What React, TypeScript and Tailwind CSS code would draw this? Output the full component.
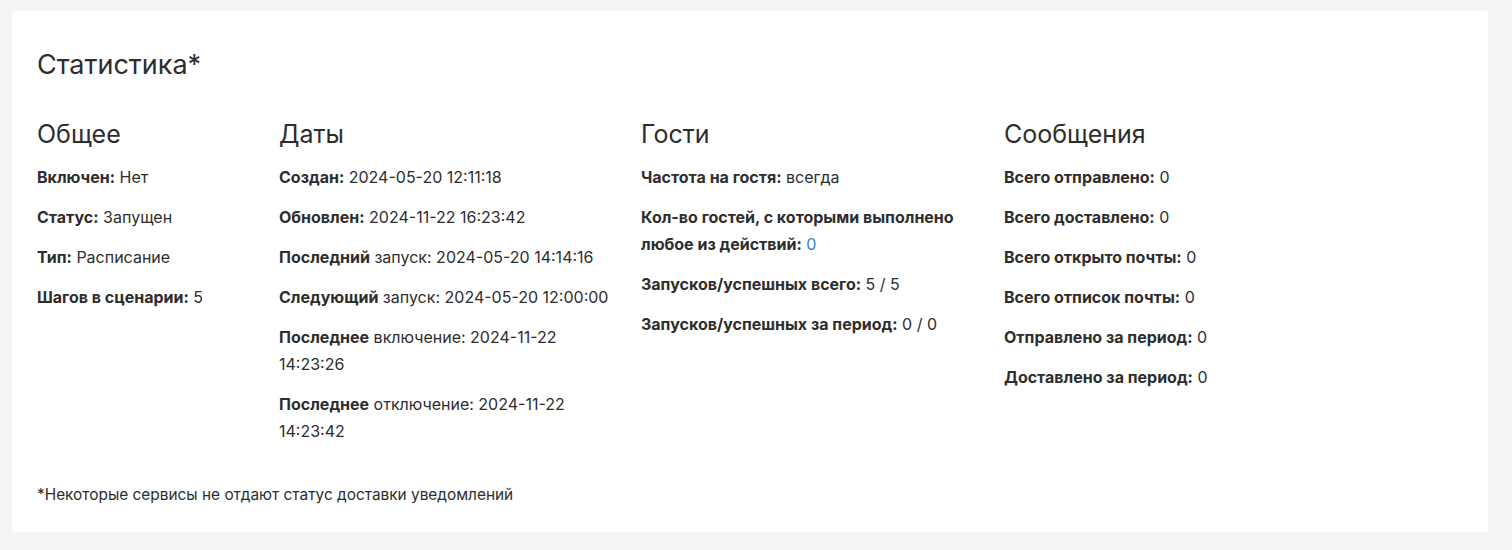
import React from "react";

function Row({ bold, rest }: { bold: string; rest: React.ReactNode }) {
  return (
    <p className="mb-[13px] text-[16px] leading-[27px] text-[#2d2d2d]">
      <span className="font-bold">{bold}</span>
      {rest}
    </p>
  );
}

function Column({ title, width, children }: { title: string; width: string; children: React.ReactNode }) {
  return (
    <div className={`${width} shrink-0 pr-[24px]`}>
      <h3 className="mb-[15px] text-[25px] leading-[30px] font-normal text-[#2d2d2d]">{title}</h3>
      {children}
    </div>
  );
}

export default function App() {
  return (
    <div
      className="min-h-[550px] bg-[#f4f4f4] pt-[11px] pl-[12px] pr-[24px] pb-[20px]"
      style={{ fontFamily: "Inter, 'Noto Sans', sans-serif" }}
    >
      <div className="rounded-[4px] bg-white px-[25px] pt-[37px] pb-[27px]">
        <h2 className="mb-[37px] text-[27px] leading-[34px] font-normal text-[#2d2d2d]">Статистика*</h2>
        <div className="flex">
          <Column title="Общее" width="w-[242px]">
            <Row bold="Включен:" rest=" Нет" />
            <Row bold="Статус:" rest=" Запущен" />
            <Row bold="Тип:" rest=" Расписание" />
            <Row bold="Шагов в сценарии:" rest=" 5" />
          </Column>
          <Column title="Даты" width="w-[362px]">
            <Row bold="Создан:" rest=" 2024-05-20 12:11:18" />
            <Row bold="Обновлен:" rest=" 2024-11-22 16:23:42" />
            <Row bold="Последний" rest=" запуск: 2024-05-20 14:14:16" />
            <Row bold="Следующий" rest=" запуск: 2024-05-20 12:00:00" />
            <Row bold="Последнее" rest=" включение: 2024-11-22 14:23:26" />
            <Row bold="Последнее" rest=" отключение: 2024-11-22 14:23:42" />
          </Column>
          <Column title="Гости" width="w-[363px]">
            <Row bold="Частота на гостя:" rest=" всегда" />
            <Row
              bold="Кол-во гостей, с которыми выполнено любое из действий:"
              rest={<> <span className="text-[#2b88d9]">0</span></>}
            />
            <Row bold="Запусков/успешных всего:" rest=" 5 / 5" />
            <Row bold="Запусков/успешных за период:" rest=" 0 / 0" />
          </Column>
          <Column title="Сообщения" width="w-[362px]">
            <Row bold="Всего отправлено:" rest=" 0" />
            <Row bold="Всего доставлено:" rest=" 0" />
            <Row bold="Всего открыто почты:" rest=" 0" />
            <Row bold="Всего отписок почты:" rest=" 0" />
            <Row bold="Отправлено за период:" rest=" 0" />
            <Row bold="Доставлено за период:" rest=" 0" />
          </Column>
        </div>
        <p className="mt-[27px] text-[15.4px] leading-[20px] text-[#2d2d2d]">
          *Некоторые сервисы не отдают статус доставки уведомлений
        </p>
      </div>
    </div>
  );
}
